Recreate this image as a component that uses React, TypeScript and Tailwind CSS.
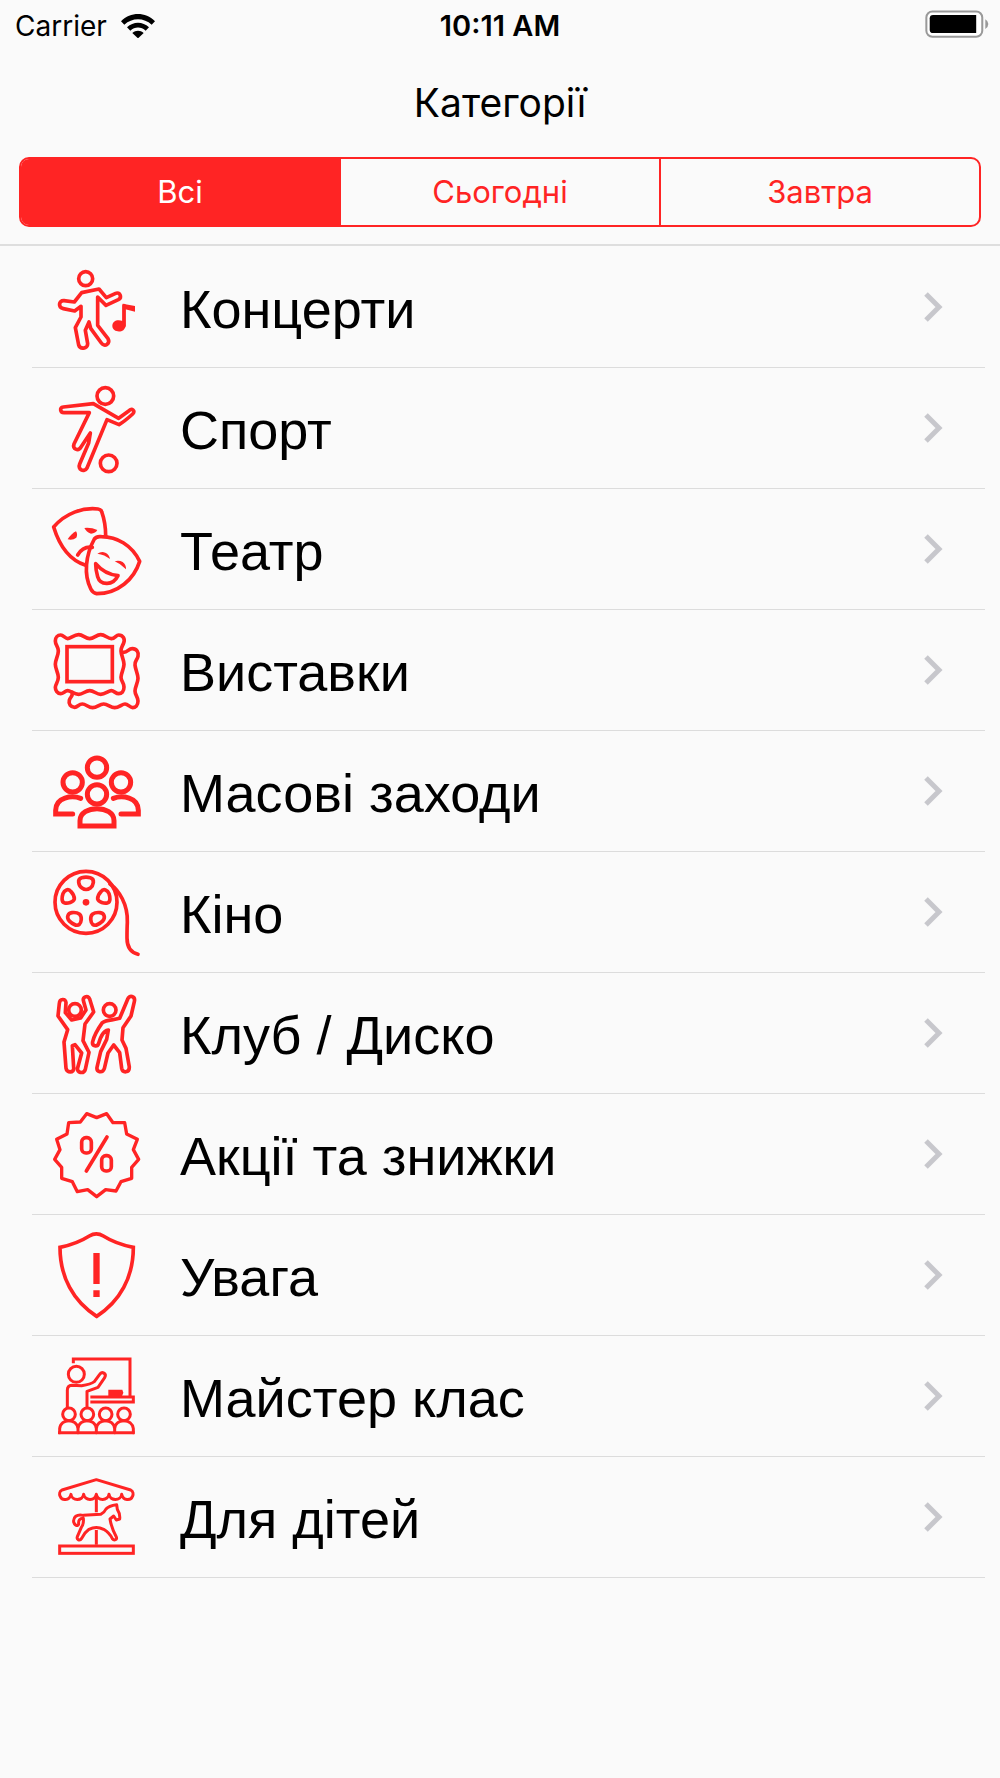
import { useState } from 'react'
import type { ReactNode } from 'react'

interface Category {
  id: string
  label: string
  viewBox: string
  icon: ReactNode
}

const PERIODS = ['Всі', 'Сьогодні', 'Завтра']

const categories: Category[] = [
  {
    id: 'concerts',
    label: 'Концерти',
    viewBox: '0 -9 330 330',
    icon: (
      <>
        <circle cx="137" cy="71" r="21" />
        <path d="M125 113 L103 141 L72 137 C55 136 54 158 70 161 L104 168 L123 154 V186 L106 218 L116 270 C120 284 144 282 143 266 L136 226 L147 201 L152 220 L184 264 C194 278 212 266 204 251 L173 211 V126 L198 151 L235 134 C248 127 239 110 227 115 L199 128 L177 102 Z" />
        <path d="M252 212 V152" />
        <path d="M248 146 L285 153 V170 L256 163 V212 C256 236 217 234 217 213 C217 197 233 192 248 198 Z" fill="currentColor" stroke="none" />
      </>
    ),
  },
  {
    id: 'sport',
    label: 'Спорт',
    viewBox: '0 -6 330 330',
    icon: (
      <>
        <circle cx="196" cy="63" r="25" />
        <circle cx="206" cy="265" r="25" />
        <path d="M160 86 L70 96 C58 98 60 113 72 113 L148 113 L102 207 C96 222 115 230 123 216 L151 174 L146 204 L119 267 C112 283 132 294 141 279 L201 134 L237 149 C252 140 267 127 278 117 C288 107 276 99 267 107 L236 130 Z" />
      </>
    ),
  },
  {
    id: 'theatre',
    label: 'Театр',
    viewBox: '0 -3 330 330',
    icon: (
      <>
        <path d="M197 122 C197 96 191 67 185 50 Q183 43 174 42 C128 37 77 54 41 96 C55 142 82 193 137 211" />
        <path d="M163 132 Q170 123 184 125 C232 125 276 151 299 199 C282 253 234 296 170 296 Q158 294 153 283 C130 239 137 180 163 132 Z" />
        <path d="M113 180 Q129 153 157 157" />
        <path d="M167 206 C183 225 205 239 234 242 C217 276 180 269 173 245 C169 231 167 220 167 206 Z" />
        <g fill="currentColor" stroke="none">
          <path d="M83 133 Q94 116 108 109 Q114 118 109 128 Q98 137 83 133 Z" />
          <path d="M133 99 Q154 97 172 105 Q167 115 153 116 Q139 111 133 99 Z" />
          <path d="M172 176 Q184 168 196 173 Q208 178 210 192 Q194 179 172 176 Z" />
          <path d="M224 199 Q236 194 248 201 Q259 210 258 223 Q242 206 224 199 Z" />
        </g>
      </>
    ),
  },
  {
    id: 'exhibitions',
    label: 'Виставки',
    viewBox: '0 0 330 330',
    icon: (
      <>
        <rect x="81" y="95" width="136" height="105" strokeLinejoin="miter" />
        <path d="M62 60 C70 60 76 71 83 71 S103 59 116 59 S136 71 149 71 S169 59 182 59 S203 71 214 71 S228 60 236 60 C249 60 256 72 251 84 S243 97 243 108 S252 135 252 148 S243 175 243 187 S252 203 252 216 C252 229 245 236 236 236 S222 227 214 227 S195 238 182 238 S162 227 149 227 S129 238 116 238 S91 227 83 227 S70 236 62 236 C52 236 46 226 46 217 S55 201 55 187 S46 162 46 148 S55 122 55 108 S46 90 46 78 C46 67 53 60 62 60 Z" />
        <path d="M247 112 C264 114 264 101 277 101 C290 101 297 112 294 124 S284 137 285 150 S294 177 294 190 S285 216 285 228 S294 245 294 258 C294 271 286 278 278 278 S264 267 255 267 S237 278 224 278 S204 267 191 267 S171 278 158 278 S138 267 127 267 S113 277 104 277 C92 277 85 267 88 256 S98 246 97 232" />
      </>
    ),
  },
  {
    id: 'events',
    label: 'Масові заходи',
    viewBox: '0 -12 330 330',
    icon: (
      <g strokeWidth="15" strokeLinejoin="miter">
        <circle cx="171" cy="83" r="29" />
        <circle cx="98" cy="127" r="29" />
        <circle cx="243" cy="127" r="29" />
        <circle cx="171" cy="163" r="29" />
        <path d="M122 175 C96 165 47 171 47 211 V222 H98" />
        <path d="M220 175 C246 165 295 171 295 211 V222 H243" />
        <path d="M120 258 V242 C120 194 222 194 222 242 V258 Z" />
      </g>
    ),
  },
  {
    id: 'cinema',
    label: 'Кіно',
    viewBox: '0 -9 330 330',
    icon: (
      <>
        <circle cx="138" cy="127" r="93" />
        <circle cx="138" cy="127" r="10" fill="currentColor" stroke="none" />
        <path d="M125 53 Q138 50 151 53 C166 57 160 77 151 84 Q138 93 126 84 C116 77 110 57 125 53 Z" />
        <path d="M69 101 C73 90 85 84 93 95 Q103 105 103 117 C100 127 83 131 74 129 C63 126 66 110 69 101 Z" />
        <path d="M207 101 C203 90 191 84 183 95 Q173 105 173 117 C176 127 193 131 202 129 C213 126 210 110 207 101 Z" />
        <path d="M88 183 C78 171 84 160 96 158 Q109 156 119 163 C127 171 124 188 118 193 C110 201 96 190 88 183 Z" />
        <path d="M188 183 C198 171 192 160 180 158 Q167 156 157 163 C149 171 152 188 158 193 C166 201 180 190 188 183 Z" />
        <path d="M210 72 C237 91 264 133 262 187 C261 205 261 212 261 234 C261 263 275 278 294 283" />
      </>
    ),
  },
  {
    id: 'club',
    label: 'Клуб / Диско',
    viewBox: '0 -6 330 330',
    icon: (
      <>
        <circle cx="105" cy="90" r="19" />
        <circle cx="209" cy="90" r="19" />
        <path d="M76 98 L78 68 C77 54 59 56 58 70 L54 108 L83 149 L72 186 L78 265 C80 280 103 279 101 264 L97 197 L105 194 L125 219 L113 263 C109 279 131 283 136 268 L147 217 L129 182 L135 132 L161 96 L149 57 C143 43 126 51 131 65 L138 90 L122 114 L95 120 Z" />
        <path d="M239 115 L263 58 C267 43 287 48 283 65 L273 108 L249 143 L246 180 L258 205 L268 261 C268 280 248 279 245 265 L239 218 L221 195 L204 219 L193 266 C187 281 169 276 171 262 L182 215 L200 178 L205 150 C188 152 181 174 176 190 C172 202 155 199 158 185 C163 164 175 145 187 128 C199 119 217 121 239 115 Z" />
      </>
    ),
  },
  {
    id: 'sales',
    label: 'Акції та знижки',
    viewBox: '0 -3 330 330',
    icon: (
      <>
        <path d="M140 41 L170 53 L200 41 L219 68 L254 68 L260 102 L292 118 L280 149 L296 178 L275 202 L275 235 L243 245 L228 273 L197 269 L170 290 L143 269 L112 275 L97 245 L65 235 L65 202 L44 178 L60 149 L50 118 L81 102 L86 68 L121 66 Z" strokeWidth="10" />
        <rect x="125" y="113" width="29" height="46" rx="13" />
        <rect x="185" y="167" width="29" height="46" rx="13" />
        <path d="M201 111 L139 213" />
      </>
    ),
  },
  {
    id: 'attention',
    label: 'Увага',
    viewBox: '0 360 330 330',
    icon: (
      <>
        <path d="M60 442 Q110 432 148 408 Q169 395 190 408 Q228 432 280 442 C280 532 240 604 170 649 C100 604 60 532 60 442 Z" strokeLinejoin="miter" />
        <path d="M160 459 H179 V552 H160 Z M160 571 H179 V591 H160 Z" fill="currentColor" stroke="none" />
      </>
    ),
  },
  {
    id: 'workshop',
    label: 'Майстер клас',
    viewBox: '0 3 330 330',
    icon: (
      <g strokeWidth="9">
        <path d="M100 70 V57 H270 V169" strokeLinejoin="miter" strokeLinecap="butt" />
        <circle cx="109" cy="103" r="24" />
        <path d="M82 202 V151 Q82 137 96 136 L125 137 Q153 133 163 125 L179 103 C186 92 201 101 194 113 L174 142 L141 154 V202" />
        <path d="M151 171 H280 V186 H151" strokeLinejoin="miter" strokeLinecap="butt" />
        <path d="M205 149 H247 L250 158 L246 169 H205 Z" fill="currentColor" stroke="none" />
        <circle cx="87" cy="223" r="19" />
        <circle cx="142" cy="223" r="19" />
        <circle cx="197" cy="223" r="19" />
        <circle cx="252" cy="223" r="19" />
        <path d="M59 278 V266 C62 234 111 234 114 266 V278 M114 266 C117 234 166 234 169 266 V278 M169 266 C172 234 221 234 224 266 V278 M224 266 C227 234 276 234 280 266 V278" />
        <path d="M54 278 H284" strokeLinecap="butt" />
      </g>
    ),
  },
  {
    id: 'kids',
    label: 'Для дітей',
    viewBox: '0 366 330 330',
    icon: (
      <g strokeWidth="9">
        <path d="M169 419 L66 450 C58 454 58 463 60 468 C66 484 88 482 93 463 C95 483 128 484 131 463 C134 483 165 484 169 463 C173 484 204 483 207 463 C210 484 243 483 245 463 C250 482 272 484 278 468 C280 463 280 454 272 450 Z" />
        <path d="M169 466 V517 M169 570 V614" strokeLinecap="butt" />
        <rect x="59" y="618" width="221" height="22" strokeLinejoin="miter" />
        <path d="M130 526 L182 523 Q193 518 198 507 Q206 497 230 494 L232 508 Q241 522 239 537 L229 540 L221 528 L210 537 Q214 563 229 591 C232 599 223 603 217 596 Q209 579 191 568 Q169 557 147 568 Q132 579 125 595 C119 604 109 599 112 590 L124 562 Q132 552 130 535 Q114 535 116 552 C113 561 104 556 101 546 C99 532 110 521 130 526 Z" />
      </g>
    ),
  },
]

function StatusBar() {
  return (
    <div className="grid h-[52px] grid-cols-3 items-center px-[15px] text-[28px] leading-8">
      <div className="flex items-center gap-[14px]">
        <span>Carrier</span>
        <svg viewBox="0 0 102 72" className="h-6 w-[34px]" role="img" aria-label="Wi-Fi">
          <path d="M0 22 C29 -7 73 -7 102 22 L92 32 C69 10 33 10 10 32 Z" />
          <path d="M18 40 C37 22 65 22 84 40 L74 50 C61 37 41 37 28 50 Z" />
          <path d="M34 57 C44 48 58 48 68 57 L51 73 Z" />
        </svg>
      </div>
      <time className="text-center text-[29px] font-semibold">10:11 AM</time>
      <svg viewBox="0 0 190 82" className="-mr-1 mb-1 h-7 w-[64px] justify-self-end" role="img" aria-label="Battery">
        <rect x="4" y="4" width="166" height="75" rx="18" fill="#fff" stroke="#999" strokeWidth="6" />
        <path d="M24 14 H152 V68 H24 Q14 68 14 58 V24 Q14 14 24 14 Z" />
        <path d="M179 27 Q188 32 188 41 Q188 50 179 56 Z" fill="#999" />
      </svg>
    </div>
  )
}

export default function App() {
  const [period, setPeriod] = useState(0)

  return (
    <div className="min-h-screen bg-[#fafafa] font-['Inter',sans-serif] text-black">
      <header className="border-b-2 border-[#dedede]">
        <StatusBar />
        <h1 className="pt-[26px] text-center text-[39px] leading-[50px]">Категорії</h1>
        {/* Period filter */}
        <div className="mx-[19px] mt-[29px] mb-[17px] flex h-[70px] overflow-hidden rounded-[10px] border-2 border-[#ff2424]">
          {PERIODS.map((label, i) => (
            <button
              key={label}
              type="button"
              aria-pressed={period === i}
              onClick={() => setPeriod(i)}
              className={`flex-1 text-[31px] ${i > 0 ? 'border-l-2 border-[#ff2424]' : ''} ${period === i ? 'bg-[#ff2424] text-white' : 'text-[#ff2424]'}`}
            >
              {label}
            </button>
          ))}
        </div>
      </header>

      <ul className="pt-px pr-[15px] pl-8">
        {categories.map(category => (
          <li key={category.id} className="border-b border-[#dcdcdc]">
            <a href={`#${category.id}`} className="flex h-[120px] items-center pr-[42px] pl-2">
              <svg
                viewBox={category.viewBox}
                className="size-[110px] shrink-0 text-[#ff2424]"
                fill="none"
                stroke="currentColor"
                strokeWidth="11"
                strokeLinecap="round"
                strokeLinejoin="round"
                aria-hidden="true"
              >
                {category.icon}
              </svg>
              <span className="ml-[30px] flex-1 pt-1 font-['Liberation_Sans',sans-serif] text-[54px] leading-[60px]">{category.label}</span>
              <svg viewBox="0 0 20 32" className="h-8 w-5 shrink-0" fill="none" stroke="#c7c7cc" strokeWidth="5" aria-hidden="true">
                <path d="M3 3 L16 16 L3 29" />
              </svg>
            </a>
          </li>
        ))}
      </ul>
    </div>
  )
}
